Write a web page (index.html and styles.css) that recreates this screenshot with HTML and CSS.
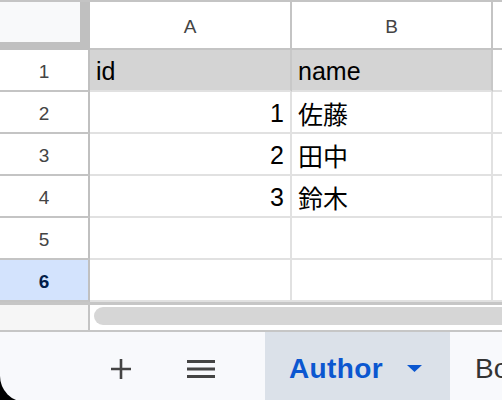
FILE: index.html
```html
<!DOCTYPE html>
<html lang="ja">
<head>
  <meta charset="UTF-8" />
  <meta name="viewport" content="width=device-width, initial-scale=1.0" />
  <title>Author - シート</title>
  <link rel="stylesheet" href="styles.css">
</head>
<body>
  <div class="app">
    <div class="sheet">
      <div class="corner"><div class="corner-box"></div></div>
      <div class="col-head">A</div>
      <div class="col-head">B</div>
      <div class="col-head col-rest"></div>

      <div class="row-head">1</div>
      <div class="cell head-cell">id</div>
      <div class="cell head-cell">name</div>
      <div class="cell col-rest"></div>

      <div class="row-head">2</div>
      <div class="cell num">1</div>
      <div class="cell">佐藤</div>
      <div class="cell col-rest"></div>

      <div class="row-head">3</div>
      <div class="cell num">2</div>
      <div class="cell">田中</div>
      <div class="cell col-rest"></div>

      <div class="row-head">4</div>
      <div class="cell num">3</div>
      <div class="cell">鈴木</div>
      <div class="cell col-rest"></div>

      <div class="row-head">5</div>
      <div class="cell"></div>
      <div class="cell"></div>
      <div class="cell col-rest"></div>

      <div class="row-head selected">6</div>
      <div class="cell"></div>
      <div class="cell"></div>
      <div class="cell col-rest"></div>
    </div>

    <div class="hscroll">
      <div class="hs-left"></div>
      <div class="hs-track"><div class="hs-thumb"></div></div>
    </div>

    <div class="tabs">
      <div class="tab-btn add">
        <svg width="20" height="20" viewBox="0 0 20 20"><path d="M10 0v20M0 10h20" stroke="#444" stroke-width="2.6" fill="none"/></svg>
      </div>
      <div class="tab-btn list">
        <svg width="28" height="18" viewBox="0 0 28 18"><rect x="0" y="0" width="28" height="3" fill="#444"/><rect x="0" y="7.5" width="28" height="3" fill="#444"/><rect x="0" y="15" width="28" height="3" fill="#444"/></svg>
      </div>
      <div class="tab active">
        <span>Author</span>
        <svg class="caret" width="15" height="7" viewBox="0 0 15 7"><path d="M0 0h15L7.5 7z" fill="#0b57d0"/></svg>
      </div>
      <div class="tab">Book</div>
    </div>
  </div>
</body>
</html>
```

FILE: styles.css
```css
html, body {
  margin: 0;
  padding: 0;
  background: #000;
  overflow: hidden;
}
.app {
  width: 502px;
  height: 400px;
  overflow: hidden;
  font-family: 'Liberation Sans', Arial, 'Noto Sans CJK JP', sans-serif;
}
.sheet {
  display: grid;
  grid-template-columns: 90px 202px 201px 1fr;
  grid-template-rows: 48px repeat(6, 42px);
  background: #fff;
  border-top: 2px solid #c4c4c4;
}
.sheet > div {
  box-sizing: border-box;
}
.corner {
  background: #c0c0c0;
  border-bottom: 2px solid #c0c0c0;
}
.corner-box {
  width: 80px;
  height: 40px;
  background: #f8f9fa;
}
.col-head {
  display: flex;
  align-items: center;
  justify-content: center;
  font-size: 19px;
  color: #444;
  border-right: 2px solid #c4c4c4;
  border-bottom: 2px solid #c4c4c4;
  padding-top: 4px;
}
.row-head {
  display: flex;
  align-items: center;
  justify-content: center;
  font-size: 19px;
  color: #444;
  background: #fff;
  border-right: 2px solid #c0c0c0;
  border-bottom: 2px solid #c4c4c4;
  padding-top: 3px;
}
.row-head.selected {
  background: #d3e3fd;
  color: #041e49;
  font-weight: bold;
}
.cell {
  display: flex;
  align-items: center;
  font-size: 25px;
  color: #000;
  padding: 2px 6px 0;
  border-right: 2px solid #e1e1e1;
  border-bottom: 2px solid #e1e1e1;
  white-space: nowrap;
}
.cell.num {
  justify-content: flex-end;
}
.head-cell {
  background: #d4d4d4;
  border-right-color: #c8c8c8;
}
.col-rest {
  border-right: none;
}
.hscroll {
  display: flex;
  height: 25px;
  border-top: 3px solid #c6c6c6;
  background: #fff;
}
.hs-left {
  width: 88px;
  background: #f6f6f6;
  border-right: 2px solid #c4c4c4;
}
.hs-track {
  flex: 1;
  padding: 2px 0 0 4px;
}
.hs-thumb {
  height: 18px;
  border-radius: 9px 0 0 9px;
  background: #d6d6d6;
}
.tabs {
  display: flex;
  align-items: stretch;
  height: 70px;
  border-top: 2px solid #c6c6c6;
  background: #f8f9fc;
  border-bottom-left-radius: 26px;
}
.tabs > div {
  flex-shrink: 0;
}
.tab-btn {
  display: flex;
  align-items: center;
  justify-content: center;
  width: 50px;
  padding-top: 3px;
}
.tab-btn.add {
  margin-left: 96px;
}
.tab-btn.list {
  margin-left: 30px;
  padding-top: 4px;
}
.tab {
  display: flex;
  align-items: center;
  box-sizing: border-box;
  padding: 4px 0 0 25px;
  font-size: 28px;
  color: #333;
  white-space: nowrap;
}
.tab.active {
  margin-left: 39px;
  width: 185px;
  padding-left: 24px;
  background: #dbe1e9;
  color: #0b57d0;
  font-weight: bold;
  letter-spacing: 0.4px;
}
.caret {
  margin-left: 24px;
  margin-top: -2px;
}
```
